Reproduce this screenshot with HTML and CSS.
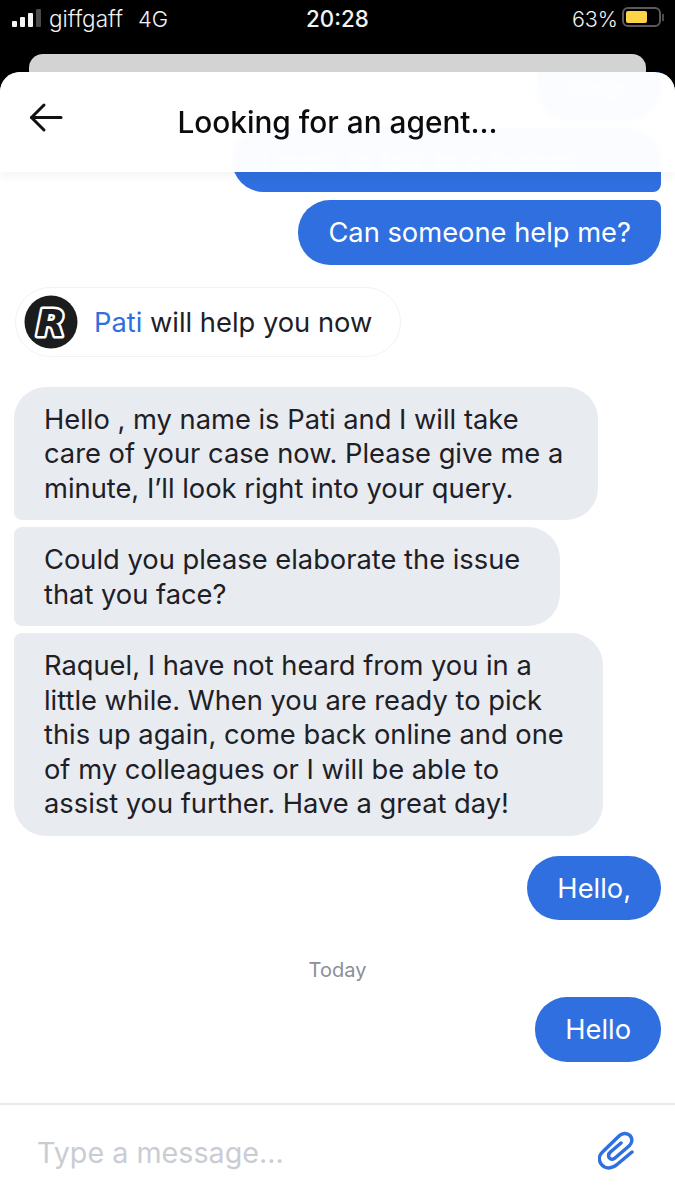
FILE: index.html
```html
<!DOCTYPE html>
<html lang="en">
<head>
  <meta charset="UTF-8">
  <meta name="viewport" content="width=device-width, initial-scale=1.0">
  <title>Chat</title>
  <link rel="stylesheet" href="styles.css">
</head>
<body>

  <div class="status-bar">
    <div class="status-left">
      <div class="signal">
        <span class="bar bar1"></span>
        <span class="bar bar2"></span>
        <span class="bar bar3"></span>
        <span class="bar bar4"></span>
      </div>
      <span class="carrier">giffgaff</span>
      <span class="network">4G</span>
    </div>
    <div class="clock">20:28</div>
    <div class="status-right">
      <span>63%</span>
      <div class="battery"><div class="battery-fill"></div></div>
      <div class="battery-cap"></div>
    </div>
  </div>

  <div class="card-behind"></div>

  <div class="sheet">
    <div class="header">
      <svg class="back" width="34" height="31" viewBox="0 0 34 31" fill="none" stroke="#111" stroke-width="3" stroke-linecap="round" stroke-linejoin="round">
        <path d="M2.5 15.5H32"/>
        <path d="M15 3L2.5 15.5L15 28"/>
      </svg>
      <h1>Looking for an agent...</h1>
    </div>

    <div class="messages">
      <div class="msg out ghost">Help</div>
      <div class="msg out first-out">I want to talk to a human</div>
      <div class="msg out second-out">Can someone help me?</div>

      <div class="joined">
        <svg class="avatar" width="54" height="54" viewBox="0 0 54 54">
          <circle cx="27" cy="27" r="26.5" fill="#1b1c1e"/>
          <text x="27" y="41" class="avatar-letter">R</text>
        </svg>
        <span class="joined-text"><span class="agent">Pati</span> will help you now</span>
      </div>

      <div class="msg in m1">Hello , my name is Pati and I will take care of your case now. Please give me a minute, I’ll look right into your query.</div>
      <div class="msg in m2">Could you please elaborate the issue that you face?</div>
      <div class="msg in m3">Raquel, I have not heard from you in a little while. When you are ready to pick this up again, come back online and one of my colleagues or I will be able to assist you further. Have a great day!</div>

      <div class="msg out hello1">Hello,</div>
      <div class="today">Today</div>
      <div class="msg out">Hello</div>
    </div>

    <div class="composer">
      <span class="placeholder">Type a message...</span>
      <svg class="clip" width="36" height="40" viewBox="0 0 36 40" fill="none" stroke="#2f6fdf" stroke-width="3.5" stroke-linecap="round" stroke-linejoin="round">
        <path d="M34 21L19 33.5C14 38 7 38 3.5 33.5C0 29 1 24 5 20.5L20 6C24 1.5 29 1.5 32 4.5C35 8 34 12 31 15L17 27C15 29 12 28.5 11 26.5C10 24 11 22 13 20.5L23 12"/>
      </svg>
    </div>
  </div>

</body>
</html>
```

FILE: styles.css
```css
body {
  margin: 0;
  background-color: #000;
  font-family: Inter, "Liberation Sans", sans-serif;
  height: 1200px;
  overflow: hidden;
  color: #1d2026;
}

.status-bar {
  height: 54px;
  display: flex;
  justify-content: space-between;
  color: #f2f2f2;
  font-size: 21.5px;
  font-weight: 300;
  position: relative;
}

.status-left {
  display: flex;
  align-items: center;
  height: 37px;
  padding-left: 12px;
}

.signal {
  display: flex;
  align-items: flex-end;
  gap: 3px;
  margin: 0 8px 2px 0;
}

.bar {
  width: 5px;
  background-color: #f4f4f4;
  border-radius: 1px;
}

.bar1 { height: 6px; }
.bar2 { height: 10px; }
.bar3 { height: 14px; }
.bar4 { height: 18px; background-color: #4a4a4a; }

.carrier {
  font-size: 22.5px;
  margin-right: 15px;
}

.network {
  font-size: 22px;
}

.clock {
  position: absolute;
  left: 306px;
  top: 6px;
  font-size: 22.3px;
  font-weight: 500;
  line-height: 25px;
}

.status-right {
  display: flex;
  align-items: center;
  height: 37px;
  padding-right: 11px;
}

.battery {
  width: 39px;
  height: 20px;
  border: 2px solid #5a5a5a;
  border-radius: 6px;
  margin: 0 0 3px 4px;
  padding: 2px;
  box-sizing: border-box;
}

.battery-fill {
  width: 21px;
  height: 100%;
  background-color: #fdd348;
  border-radius: 2px;
}

.battery-cap {
  width: 2px;
  height: 7px;
  background-color: #4a4a4a;
  margin: 0 0 3px 1px;
}

.card-behind {
  height: 40px;
  margin: 0 29px;
  background-color: #d3d3d3;
  border-radius: 14px 14px 0 0;
}

.sheet {
  margin-top: -22px;
  height: 1128px;
  background-color: #fff;
  border-radius: 20px 20px 0 0;
  position: relative;
  overflow: hidden;
  display: flex;
  flex-direction: column;
}

.header {
  position: absolute;
  top: 0;
  left: 0;
  right: 0;
  height: 100px;
  background-color: rgba(255, 255, 255, 0.975);
  backdrop-filter: blur(3px);
  box-shadow: 0 5px 9px rgba(0, 0, 0, 0.04);
  z-index: 2;
}

.back {
  position: absolute;
  left: 29px;
  top: 30px;
}

h1 {
  margin: 0;
  padding-top: 33px;
  text-align: center;
  font-size: 29.8px;
  line-height: 34px;
  font-weight: 500;
  color: #0c0c0e;
}

.messages {
  flex: 1;
  padding: 0 14px;
  display: flex;
  flex-direction: column;
  font-size: 27.3px;
  line-height: 34.5px;
  overflow: hidden;
}

.msg {
  padding: 16px 30px 14px;
  flex-shrink: 0;
}

.out {
  align-self: flex-end;
  background-color: #2f6fdf;
  color: #fff;
  border-radius: 32px;
}

/* top of this one has scrolled off */
.ghost {
  width: 64px;
  padding-top: 0;
  border-radius: 0 0 32px 32px;
  margin-bottom: 7px;
}

.first-out {
  width: 369px;
  white-space: nowrap;
  border-bottom-right-radius: 8px;
  margin-bottom: 8px;
}

.second-out {
  border-top-right-radius: 8px;
}

.in {
  align-self: flex-start;
  background-color: #e8ebf0;
  border-radius: 8px 32px 32px 8px;
  margin-bottom: 7px;
}

.m1 { width: 524px; border-top-left-radius: 32px; }
.m2 { width: 486px; }
.m3 { width: 529px; border-bottom-left-radius: 32px; margin-bottom: 20px; }

.joined {
  align-self: flex-start;
  display: flex;
  align-items: center;
  gap: 16px;
  margin: 22px 0 30px 1px;
  padding: 7px 28px 7px 8px;
  border: 1px solid #f1f2f4;
  border-radius: 36px;
}

.joined-text {
  padding-top: 3px;
}

.avatar {
  display: block;
}

.avatar-letter {
  font-family: "DejaVu Sans", sans-serif;
  font-size: 38px;
  font-weight: 700;
  font-style: italic;
  text-anchor: middle;
  fill: #1b1c1e;
  stroke: #fff;
  stroke-width: 5px;
  stroke-linejoin: round;
  paint-order: stroke;
}

.agent {
  color: #2f6fdf;
}

.today {
  text-align: center;
  font-size: 20px;
  line-height: 26px;
  color: #8b9097;
  margin: 37px 0 14px;
}

.composer {
  height: 95px;
  flex-shrink: 0;
  border-top: 2px solid #e9e9eb;
  display: flex;
  align-items: center;
  justify-content: space-between;
  padding: 0 41px 0 37px;
}

.placeholder {
  font-size: 28.7px;
  color: #c9cdd3;
}

.clip {
  margin-bottom: 3px;
}
```
